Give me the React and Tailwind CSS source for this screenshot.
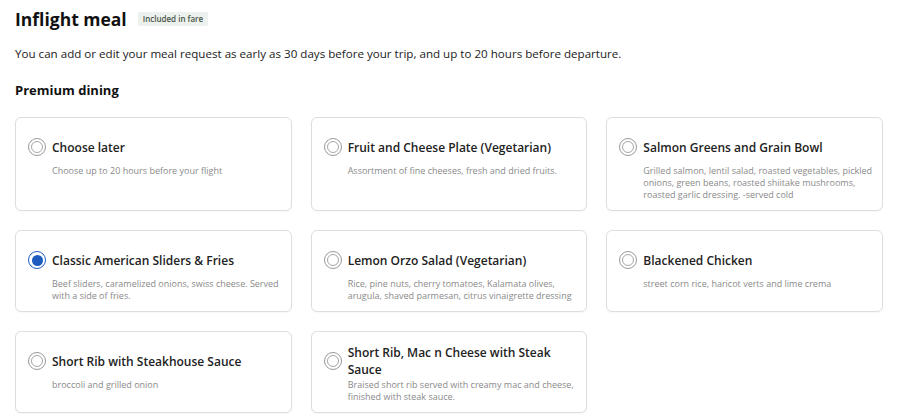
import React, { useState } from "react";

const font = { fontFamily: '"Open Sans", "Noto Sans", Arial, sans-serif' };

const meals = [
  { id: "later", title: "Choose later", desc: "Choose up to 20 hours before your flight" },
  { id: "fruit", title: "Fruit and Cheese Plate (Vegetarian)", desc: "Assortment of fine cheeses, fresh and dried fruits." },
  { id: "salmon", title: "Salmon Greens and Grain Bowl", desc: "Grilled salmon, lentil salad, roasted vegetables, pickled onions, green beans, roasted shiitake mushrooms, roasted garlic dressing. -served cold" },
  { id: "sliders", title: "Classic American Sliders & Fries", desc: "Beef sliders, caramelized onions, swiss cheese. Served with a side of fries." },
  { id: "orzo", title: "Lemon Orzo Salad (Vegetarian)", desc: "Rice, pine nuts, cherry tomatoes, Kalamata olives, arugula, shaved parmesan, citrus vinaigrette dressing" },
  { id: "chicken", title: "Blackened Chicken", desc: "street corn rice, haricot verts and lime crema" },
  { id: "shortrib", title: "Short Rib with Steakhouse Sauce", desc: "broccoli and grilled onion" },
  { id: "macncheese", title: "Short Rib, Mac n Cheese with Steak Sauce", desc: "Braised short rib served with creamy mac and cheese, finished with steak sauce." },
];

const Radio = ({ checked }) => {
  if (checked) return (
    <div className="w-[18px] h-[18px] shrink-0 rounded-full border-[1.5px] border-[#1d5bbf] flex items-center justify-center">
      <div className="w-[11px] h-[11px] rounded-full bg-[#1d5bbf]" />
    </div>
  )
  return (
    <div className="w-[18px] h-[18px] shrink-0 rounded-full border border-[#999] flex items-center justify-center">
      <div className="w-[12px] h-[12px] rounded-full border border-[#a6a6a6]" />
    </div>
  )
}

const MealCard = ({ meal, selected, onSelect }) => {
  return (
    <div
      className="bg-white border border-[#dedede] rounded-[6px] shadow-[0_1px_2px_rgba(0,0,0,0.04)] pt-[12px] pb-[9.5px] pl-[12px] pr-[9px] cursor-pointer"
      onClick={() => onSelect(meal.id)}>
      <div className="flex items-center gap-[6px] min-h-[35px]">
        <Radio checked={selected} />
        <div className="text-[12px] leading-[17px] font-semibold text-[#222]">{meal.title}</div>
      </div>
      <div className="pl-[24px] text-[9px] leading-[12px] text-[#8a8a8a]">{meal.desc}</div>
    </div>
  )
}

export default function App() {
  const [selected, setSelected] = useState("sliders");

  return (
    <div className="w-[900px] h-[419px] bg-white overflow-hidden px-[15px]" style={font}>
      <div className="flex items-center gap-[11px] pt-[6px] h-[31px]">
        <h1 className="text-[17.5px] font-bold text-[#111] leading-[24px]">Inflight meal</h1>
        <span className="bg-[#edf1ed] text-[#485548] text-[8px] font-semibold px-[5px] py-[2px] rounded-[2px] leading-[10px]">Included in fare</span>
      </div>
      <p className="mt-[15px] text-[11.6px] leading-[16px] text-[#222]">
        You can add or edit your meal request as early as 30 days before your trip, and up to 20 hours before departure.
      </p>
      <h2 className="mt-[19px] text-[13px] font-bold text-[#111] leading-[18px]">Premium dining</h2>
      <div className="grid grid-cols-3 gap-x-[19px] gap-y-[18.5px] w-[868px] mt-[17.5px]">
        {meals.map((meal) => (
          <MealCard key={meal.id} meal={meal} selected={selected === meal.id} onSelect={setSelected} />
        ))}
      </div>
    </div>
  )
}
